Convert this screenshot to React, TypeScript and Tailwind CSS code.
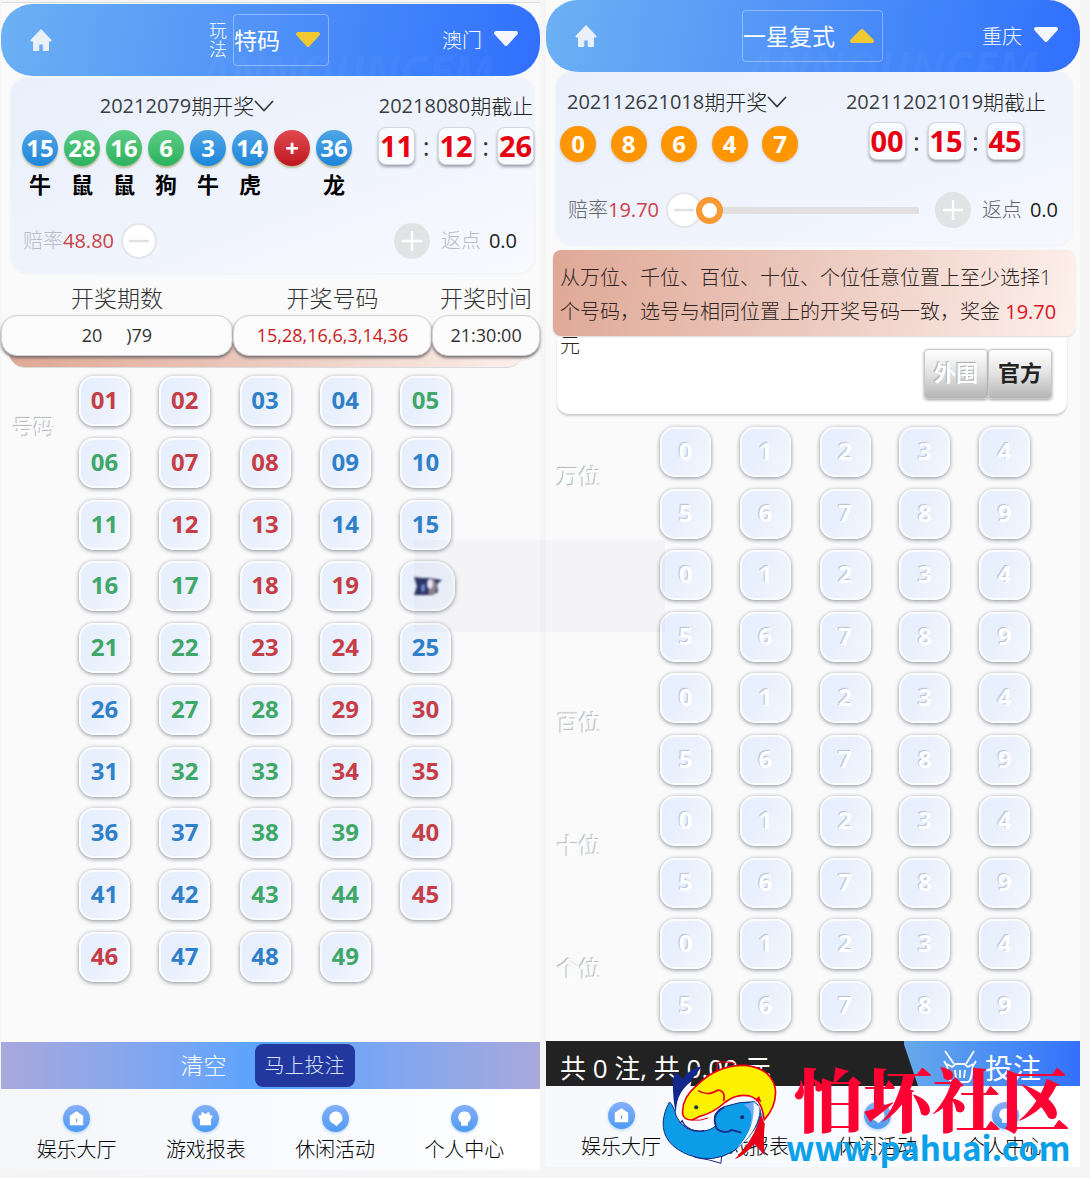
import React from "react";

const CJK = "font-['Open_Sans','Noto_Sans_CJK_SC',sans-serif]";

const BLUE = "text-[#2f80c8]";
const RED = "text-[#c63d47]";
const GREEN = "text-[#3fa768]";

const redSet = [1, 2, 7, 8, 12, 13, 18, 19, 23, 24, 29, 30, 34, 35, 40, 45, 46];
const blueSet = [3, 4, 9, 10, 14, 15, 20, 25, 26, 31, 36, 37, 41, 42, 47, 48];

function numberColour(n: number) {
  if (redSet.includes(n)) return RED;
  if (blueSet.includes(n)) return BLUE;
  return GREEN;
}

function HomeIcon() {
  return (
    <svg viewBox="0 0 22 22" className="size-[22px]" fill="#e9f0f8" aria-hidden="true">
      <path d="M11 0.5 L21 11 L21 12 H18.5 V21.5 H13.2 V15 H8.8 V21.5 H3.5 V12 H1 V11 Z" stroke="#e9f0f8" strokeLinejoin="round" />
    </svg>
  );
}

function Triangle({ fill, up = false }: { fill: string; up?: boolean }) {
  return (
    <svg viewBox="0 0 26 18" className="h-[18px] w-[26px] shrink-0" aria-hidden="true">
      <path
        d={up ? "M13 4 L23 14 H3 Z" : "M3 3 H23 L13 14 Z"}
        fill={fill}
        stroke={fill}
        strokeWidth="4"
        strokeLinejoin="round"
      />
    </svg>
  );
}

function Header({ prefix, title, region, up }: { prefix?: boolean; title: string; region: string; up?: boolean }) {
  return (
    <header className="relative flex h-[72px] items-center overflow-hidden rounded-[32px] bg-linear-100 from-[#6cb0f4] via-[#4f91f8] to-[#316ffd] text-white">
      <span
        aria-hidden="true"
        className="pointer-events-none absolute top-[42px] left-[200px] text-[46px] leading-[50px] font-bold whitespace-nowrap text-white/3 italic select-none"
      >
        ANNOUNCEM
      </span>
      <a href="#home" aria-label="首页" className="ml-[29px]">
        <HomeIcon />
      </a>
      <div className={prefix ? "flex flex-1 items-center justify-center pl-[44px]" : "flex flex-1 items-center justify-center pl-4"}>
        {prefix && <span className="w-[20px] text-[18px] leading-[19px] font-light">玩法</span>}
        <button
          type="button"
          className={
            prefix
              ? "ml-1 flex h-[52px] w-[96px] items-center justify-between rounded border border-white/35 pr-[7px] text-[23px] whitespace-nowrap"
              : "ml-[30px] flex h-[52px] w-[141px] items-center justify-between rounded border border-white/35 pr-[7px] text-[23px] whitespace-nowrap"
          }
        >
          {title}
          <Triangle fill="#f0c933" up={up} />
        </button>
      </div>
      <button type="button" className="mr-[21px] flex items-center gap-[11px] pt-[2px] text-[20px] font-light">
        {region}
        <span className="pb-1">
          <Triangle fill="#f3f6fb" />
        </span>
      </button>
    </header>
  );
}

function Issue({ digits, label, open }: { digits: string; label: string; open?: boolean }) {
  return (
    <div className="flex h-[30px] items-center justify-center text-[21px] leading-[30px] font-light whitespace-nowrap text-[#222]">
      <span className="text-[20px] font-normal text-[#3a3d42]">{digits}</span>
      {label}
      {open && (
        <svg viewBox="0 0 20 14" className="h-[14px] w-5" fill="none" stroke="#333" strokeWidth="1.6" aria-hidden="true">
          <path d="M1 2 L10 11.5 L19 2" />
        </svg>
      )}
    </div>
  );
}

function Countdown({ parts }: { parts: string[] }) {
  return (
    <div className="flex items-center justify-between">
      {parts.map((p, i) => (
        <React.Fragment key={i}>
          {i > 0 && <span className="w-[22px] text-center text-[26px] leading-[38px] text-[#333]">:</span>}
          <span className="flex h-[38px] w-[37px] items-center justify-center rounded-lg border border-[#d3d7e0] bg-[#f9fbff] text-[29px] leading-[38px] font-bold text-[#e60012] shadow-[0_2px_3px_#9aa0aa]">
            {p}
          </span>
        </React.Fragment>
      ))}
    </div>
  );
}

const ballStyle: Record<string, string> = {
  blue: "bg-linear-to-b from-[#4fa5e6] to-[#1b86d9] shadow-[0_2px_2px_#b9b893]",
  green: "bg-linear-to-b from-[#5bcd86] to-[#2bb25e] shadow-[0_2px_2px_#b9b893]",
  red: "bg-linear-to-b from-[#e2484f] to-[#bd1420] shadow-[0_2px_2px_#b9b893]",
  orange: "bg-[#ff9500] shadow-[0_1px_3px_#c9ccd6]",
};

function Ball({ tone, children }: { tone: string; children: React.ReactNode }) {
  return (
    <span
      className={`${ballStyle[tone]} flex size-9 items-center justify-center rounded-full text-[24px] leading-9 font-bold text-white`}
    >
      {children}
    </span>
  );
}

const draw = [
  ["15", "blue", "牛"],
  ["28", "green", "鼠"],
  ["16", "green", "鼠"],
  ["6", "green", "狗"],
  ["3", "blue", "牛"],
  ["14", "blue", "虎"],
  ["+", "red", ""],
  ["36", "blue", "龙"],
];

function RoundButton({ plus }: { plus?: boolean }) {
  return (
    <button
      type="button"
      aria-label={plus ? "增加" : "减少"}
      className={
        plus
          ? "flex size-9 shrink-0 items-center justify-center rounded-full bg-[#e1e3e5]"
          : "flex size-9 shrink-0 items-center justify-center rounded-full border-2 border-[#e4e6ea] bg-white"
      }
    >
      <svg viewBox="0 0 20 20" className="size-5" stroke={plus ? "#ffffff" : "#dfe1e4"} strokeWidth="2.4" aria-hidden="true">
        <path d={plus ? "M0 10 H20 M10 0 V20" : "M0 10 H20"} />
      </svg>
    </button>
  );
}

const keyBase =
  "flex h-[50px] w-[51px] items-center justify-center rounded-[15px] border-2 border-[#fafbfe] bg-linear-115 from-[#e6edfd] via-[#eaf1fd] to-[#f4f8fe] pb-[2px] text-[24px] leading-none font-bold shadow-[0_1px_4px_#858a92]";

const navItems = ["娱乐大厅", "游戏报表", "休闲活动", "个人中心"];

function NavGlyph({ index }: { index: number }) {
  const shapes = [
    <path key="h" d="M12 4.5 L19 9 V19 H5 V9 Z M11.4 12 V16 H12.6 V12 Z" fillRule="evenodd" strokeLinejoin="round" />,
    <path
      key="g"
      d="M5 8.5 H19 V12 H17.8 V19 H6.2 V12 H5 Z M8 8.5 C6.5 5 9 4.2 12 7.6 C15 4.2 17.5 5 16 8.5 Z"
    />,
    <path key="c" d="M12 4.6 A6.8 6.8 0 0 1 15.5 17.4 L13 20 L10.8 18 A6.8 6.8 0 0 1 12 4.6 Z" />,
    <path key="b" d="M12 4.6 A6.2 6.2 0 0 1 15.6 16 V19.5 H8.4 V16 A6.2 6.2 0 0 1 12 4.6 Z" />,
  ];
  return (
    <span className="flex size-[27px] items-center justify-center rounded-full bg-linear-to-b from-[#85aef8] to-[#4a9bf3] shadow-[0_1px_3px_#a9cdf8]">
      <svg viewBox="0 0 24 24" className="size-[23px]" fill="#fff" aria-hidden="true">
        {shapes[index]}
      </svg>
    </span>
  );
}

function BottomNav() {
  return (
    <nav className="mx-[11px] grid h-[81px] grid-cols-4 pt-4">
      {navItems.map((t, i) => (
        <a key={t} href={`#tab-${i}`} className="flex flex-col items-center text-[20px] leading-[28px] font-light whitespace-nowrap text-black">
          <NavGlyph index={i} />
          <span className="mt-1">{t}</span>
        </a>
      ))}
    </nav>
  );
}

function SmudgedKey() {
  return (
    <button
      type="button"
      aria-label="20"
      className="flex h-[50px] w-[55px] items-center justify-center rounded-[15px] rounded-r-[20px] border-2 border-[#fafbfe] bg-linear-115 from-[#e6edfd] to-[#f1f6fc] shadow-[0_1px_4px_#858a92]"
    >
      <svg viewBox="0 0 32 22" className="h-[22px] w-8 blur-[1px]" aria-hidden="true">
        <path d="M2 2 L10 3 H18 L30 5 L25 9 L26 17 L20 20 H2 L5 11 Z" fill="#27305f" />
        <path d="M19 3 C26 4 26 17 21 20 L16 19 Z" fill="#8f7f86" />
        <ellipse cx="18" cy="9" rx="3" ry="5" fill="#f0ecff" />
        <ellipse cx="11" cy="13" rx="2" ry="4" fill="#6f86cf" />
      </svg>
    </button>
  );
}

function LeftScreen() {
  return (
    <section className="flex min-w-0 flex-col border-t border-[#dcdcdc] bg-[#fafafb] pt-px">
      <Header prefix title="特码" region="澳门" />
      <div className="mt-0.5 mr-[6px] ml-[10px] rounded-2xl bg-linear-160 from-[#e9f0fc] via-[#eff3fd] to-[#f8fafe] pt-[13px] pb-[14px] shadow-[0_0_3px_#e3e8f2]">
        <div className="flex justify-between">
          <div className="ml-[11px] w-[330px]">
            <Issue digits="20212079" label="期开奖" open />
            <ul className="mt-[9px] flex justify-between">
              {draw.map(([n, tone, animal], i) => (
                <li key={i} className="flex flex-col items-center">
                  <Ball tone={tone}>{n}</Ball>
                  <span className="mt-1 h-7 text-[22px] leading-7 font-bold text-black">{animal}</span>
                </li>
              ))}
            </ul>
          </div>
          <div className="w-[156px]">
            <Issue digits="20218080" label="期截止" />
            <div className="mt-[6px]">
              <Countdown parts={["11", "12", "26"]} />
            </div>
          </div>
        </div>
        <div className="mt-[25px] flex items-center pr-[17px] pl-3 text-[20px] font-light">
          <span className="text-[#b9bdc4]">赔率</span>
          <span className="mr-[7px] font-normal text-[#cc4148]">48.80</span>
          <RoundButton />
          <span className="flex-1" />
          <RoundButton plus />
          <span className="ml-[11px] text-[#b9bdc4]">返点</span>
          <span className="ml-2 font-normal text-[#222]">0.0</span>
        </div>
      </div>
      <table className="relative z-10 w-full table-fixed border-separate border-spacing-0">
        <colgroup>
          <col className="w-[43%]" />
          <col className="w-[37%]" />
          <col className="w-[20%]" />
        </colgroup>
        <thead>
          <tr className="text-[23px] leading-[34px] whitespace-nowrap text-[#333]">
            <th className="pt-2 font-light">开奖期数</th>
            <th className="pt-2 font-light">开奖号码</th>
            <th className="pt-2 font-light">开奖时间</th>
          </tr>
        </thead>
        <tbody>
          <tr className="h-[41px] text-center text-[18px] whitespace-nowrap text-[#333]">
            <td className="rounded-2xl border border-[#d4d4d6] bg-[#fcfcfd] shadow-[0_2px_3px_#77706e]">
              20<span className="inline-block w-[24px]" />)79
            </td>
            <td className="rounded-2xl border border-[#d4d4d6] bg-[#fcfcfd] text-[#c81a22] shadow-[0_2px_3px_#77706e]">
              15,28,16,6,3,14,36
            </td>
            <td className="rounded-2xl border border-[#d4d4d6] bg-[#fcfcfd] shadow-[0_2px_3px_#77706e]">21:30:00</td>
          </tr>
        </tbody>
      </table>
      <div className="mr-[17px] ml-2 -mt-4 h-7 rounded-b-2xl border-b border-[#dcdcdc] bg-linear-to-r from-[#dfa894] via-[#eccabf] to-[#fbf0ec]" />
      <div className="mt-2 flex">
        <div className="mt-[35px] w-[78px] pl-3 text-[21px] leading-8 font-bold text-[#fcfcfc] [text-shadow:-1px_-1px_1px_#b5b5b5]">号码</div>
        <div className="grid h-[606px] w-[372px] grid-cols-[repeat(5,51px)] content-between justify-between">
          {Array.from({ length: 49 }, (_, i) => i + 1).map((n) =>
            n === 20 ? (
              <SmudgedKey key={n} />
            ) : (
              <button key={n} type="button" className={`${keyBase} ${numberColour(n)}`}>
                {String(n).padStart(2, "0")}
              </button>
            ),
          )}
        </div>
      </div>
      <div className="mt-[60px] flex h-[47px] items-center justify-center gap-[28px] bg-linear-to-r from-[#a8a8dc] via-[#56a3ff] to-[#a8a8dc] pr-[6px]">
        <button type="button" className="text-[23px] font-light text-white">
          清空
        </button>
        <button type="button" className="h-[43px] rounded-lg bg-[#22389f] px-[10px] text-[20px] font-light text-[#d8e2ff]">
          马上投注
        </button>
      </div>
      <div className="bg-linear-to-r from-[#f5f6f8] via-[#f7faff] to-white">
        <BottomNav />
      </div>
    </section>
  );
}

const places = ["万位", "", "百位", "十位", "个位"];

function BasketIcon() {
  return (
    <svg viewBox="0 0 34 36" className="h-9 w-[34px]" fill="none" stroke="#fff" strokeWidth="1.8" aria-hidden="true">
      <path d="M2 1 L11 14 M31 1 L23 14 M1 11 L4 16 M33 11 L30 16 M4 14 C5 22 5 30 9 32 H25 C29 30 29 22 30 14 M4 14 L9 17 L13 14 H21 L25 17 L30 14 M12 20 L13 28 M17 20 V28 M22 20 L21 28" />
    </svg>
  );
}

function FishLogo() {
  return (
    <svg viewBox="35 35 350 312" className="h-[104px] w-[117px]" aria-hidden="true">
      <path d="M75 66 L100 88 Q118 58 158 50 Q140 72 124 96 Q88 130 78 190 Q64 112 75 66 Z" fill="#14278c" />
      <path d="M126 96 Q78 132 80 190 Q90 250 164 240 Q258 204 316 170 L345 200 Q340 150 304 138 L228 130 L104 190 Z" fill="#f8faff" />
      <path d="M136 324 Q180 330 214 342 L218 306 Z" fill="#f8faff" stroke="#182a82" strokeWidth="3" />
      <path d="M60 158 Q72 168 80 200 Q104 250 156 246 Q184 244 200 228 Q182 190 224 172 Q268 156 316 157 Q344 180 326 216 Q308 262 254 304 Q190 344 120 318 Q38 286 41 218 Q44 184 60 158 Z" fill="#0c9ce8" stroke="#182a82" strokeWidth="3" />
      <path d="M100 196 Q94 148 142 108 Q204 46 286 48 Q364 56 377 116 Q384 168 344 212 Q338 150 300 140 Q262 132 228 158 Q190 192 148 202 L128 212 Q104 212 100 196 Z" fill="#fff200" stroke="#e60018" strokeWidth="5" strokeLinejoin="round" />
      <path d="M146 124 Q174 142 206 122 Q230 126 222 156" fill="none" stroke="#e60018" strokeWidth="5" />
      <path d="M128 212 Q150 216 176 206" fill="none" stroke="#e60018" strokeWidth="3" />
      <path d="M92 222 L98 214 L104 226 Q128 250 164 244" fill="none" stroke="#182a82" strokeWidth="4" />
      <path d="M202 238 Q182 196 224 174 M200 238 Q226 256 246 242 L276 250" fill="none" stroke="#182a82" strokeWidth="5" />
      <path d="M282 166 L318 156 Q336 186 300 230 Q318 184 282 166 Z" fill="#72a9f6" />
      <path d="M330 172 Q332 240 260 300 Q320 236 312 160 Z" fill="#f8faff" />
      <path d="M334 196 L346 224 Q340 272 346 318 L314 284 Q286 318 256 330 Q304 280 324 226 Z" fill="#e60018" />
      <path d="M318 152 L328 142 L334 158" fill="#e60018" stroke="#e60018" strokeWidth="3" />
      <path d="M202 66 L204 40 Q238 34 256 44" fill="none" stroke="#e60018" strokeWidth="4" />
      <circle cx="140" cy="174" r="6" fill="#133047" />
      <circle cx="278" cy="204" r="6" fill="#102a72" />
    </svg>
  );
}

function RightScreen() {
  return (
    <section className="relative flex min-w-0 flex-col bg-[#fafafb]">
      <Header title="一星复式" region="重庆" up />
      <div className="mr-[8px] ml-[10px] rounded-2xl bg-linear-160 from-[#e9f0fc] via-[#eff3fd] to-[#f5f8fe] pt-[15px] pb-[17px] shadow-[0_0_3px_#e3e8f2]">
        <div className="flex justify-between">
          <div className="ml-1 w-[238px]">
            <div className="flex pl-[7px]">
              <Issue digits="202112621018" label="期开奖" open />
            </div>
            <div className="mt-[9px] flex justify-between">
              {["0", "8", "6", "4", "7"].map((n, i) => (
                <Ball key={i} tone="orange">
                  {n}
                </Ball>
              ))}
            </div>
          </div>
          <div className="mr-[25px] flex w-[202px] flex-col items-center">
            <Issue digits="202112021019" label="期截止" />
            <div className="mt-[5px] w-[155px]">
              <Countdown parts={["00", "15", "45"]} />
            </div>
          </div>
        </div>
        <div className="mt-[30px] flex items-center pr-[14px] pl-3 text-[20px] font-light">
          <span className="text-[#62666d]">赔率</span>
          <span className="mr-[7px] font-normal text-[#cc4148]">19.70</span>
          <RoundButton />
          <input
            type="range"
            min="0"
            max="100"
            defaultValue="0"
            aria-label="赔率"
            className="-ml-[6px] h-[27px] min-w-0 flex-1 appearance-none bg-transparent bg-[linear-gradient(#e2dfe3,#e2dfe3)] bg-[length:calc(100%-10px)_7px] bg-right bg-no-repeat [&::-webkit-slider-thumb]:size-[27px] [&::-webkit-slider-thumb]:appearance-none [&::-webkit-slider-thumb]:rounded-full [&::-webkit-slider-thumb]:border-[6px] [&::-webkit-slider-thumb]:border-[#f79a33] [&::-webkit-slider-thumb]:bg-white"
          />
          <span className="w-4" />
          <RoundButton plus />
          <span className="ml-[11px] text-[#62666d]">返点</span>
          <span className="ml-2 font-normal text-[#222]">0.0</span>
        </div>
      </div>
      <div className="relative z-10 mt-[5px] mr-[5px] ml-[7px] h-[86px] rounded-lg bg-linear-100 from-[#dfa896] via-[#eccabf] to-[#fdf0ec] pt-[11px] pr-1 pl-[7px] text-[20px] leading-[34px] font-light text-[#2e2522] shadow-[0_1px_2px_#d8d8d8]">
        从万位、千位、百位、十位、个位任意位置上至少选择1个号码，选号与相同位置上的开奖号码一致，奖金{" "}
        <span className="font-normal text-[#e01020]">19.70</span> 元
      </div>
      <div className="mr-[13px] ml-[11px] flex h-[78px] justify-end rounded-b-xl bg-white pt-[13px] pr-[15px] shadow-[0_2px_2px_#cfcfcf]">
        <button type="button" className="h-[50px] w-16 rounded-sm border border-[#c8c8c8] bg-linear-to-b from-white via-[#e2e2e2] to-[#b5b5b5] pb-1 text-[22px] font-bold text-white shadow-[0_1px_3px_#999] [text-shadow:-1px_-1px_1px_#aaa]">
          外围
        </button>
        <button type="button" className="h-[50px] w-16 rounded-sm border border-[#c8c8c8] bg-linear-to-b from-white via-[#e2e2e2] to-[#b5b5b5] pb-1 text-[22px] font-bold text-[#222] shadow-[0_1px_3px_#999]">
          官方
        </button>
      </div>
      <div className="mt-[13px] flex flex-col gap-[11px]">
        {places.map((p, g) => (
          <div key={g} className="flex">
            <div className="w-[114px] pt-[33px] pl-[11px] text-[22px] leading-8 font-bold text-[#fcfcfc] [text-shadow:-1px_-1px_1px_#b5b5b5]">{p}</div>
            <div className="grid w-[370px] grid-cols-[repeat(5,51px)] justify-between gap-y-3">
              {Array.from({ length: 10 }, (_, n) => (
                <button key={n} type="button" className={`${keyBase} text-white [text-shadow:-1px_-1px_1px_#b9c0ce]`}>
                  {n}
                </button>
              ))}
            </div>
          </div>
        ))}
      </div>
      <div className="mt-[10px] flex h-[45px] justify-between bg-[#222]">
        <p className="pl-[14px] text-[26px] leading-[54px] whitespace-nowrap text-white">
          共 0 注, 共 0.00 元
        </p>
        <button
          type="button"
          className="flex w-[176px] items-center justify-center gap-2 bg-linear-to-r from-[#67a9ea] to-[#3470fb] pt-2 text-[28px] text-white [clip-path:polygon(0_0,100%_0,100%_100%,8%_100%,0_8%)]"
        >
          <BasketIcon />
          投注
        </button>
      </div>
      <div className="bg-linear-to-r from-[#f7f9fc] via-[#f7faff] to-white">
        <BottomNav />
      </div>
      <div className="pointer-events-none absolute right-[4px] bottom-[2px] z-20 flex items-end gap-2">
        <FishLogo />
        <div className="w-[290px] whitespace-nowrap">
          <div className="pl-2 font-['Noto_Serif_CJK_SC','Noto_Sans_CJK_SC',serif] text-[69px] leading-[66px] font-black text-[#ff0033]">怕坏社区</div>
          <div className="pb-[2px] font-['Noto_Sans_CJK_SC',sans-serif] text-[33px] leading-[32px] font-bold text-[#0ba0ea]">www.pahuai.com</div>
        </div>
      </div>
    </section>
  );
}

export default function App() {
  return (
    <main className={`${CJK} relative min-h-screen bg-[#f5f5f6] pr-[10px] pl-px`}>
      <div className="grid grid-cols-[539fr_534fr] items-start gap-[6px]">
        <div className="min-w-0 pt-[2px]">
          <LeftScreen />
        </div>
        <RightScreen />
      </div>
      <div aria-hidden="true" className="pointer-events-none absolute top-[540px] left-[38%] h-[92px] w-[23%] bg-[#8a8f94]/5" />
    </main>
  );
}
